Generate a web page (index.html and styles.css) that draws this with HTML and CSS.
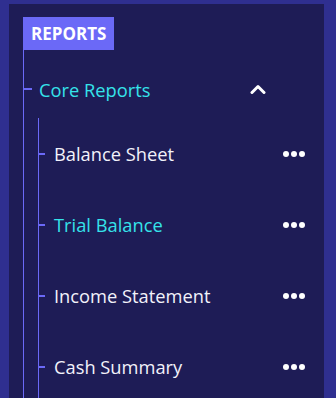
FILE: index.html
```html
<!DOCTYPE html>
<html>
	<head>
		<meta charset="UTF-8">
		<title>Reports</title>
		<link rel="stylesheet" href="styles.css">
	</head>
	<body>
		<section class="panel">
			<div class="badge">REPORTS</div>
			<ul class="tree">
				<li class="group">
					<div class="group-head">
						<span class="group-title">Core Reports</span>
						<svg class="chevron" width="16" height="10" viewBox="0 0 16 10">
							<polyline points="2,8.5 8,2.5 14,8.5" fill="none" stroke="#fff" stroke-width="3" stroke-linecap="round" stroke-linejoin="round" />
						</svg>
					</div>
					<ul class="items">
						<li class="item"><span class="label">Balance Sheet</span><span class="more"><i></i><i></i><i></i></span></li>
						<li class="item active"><span class="label">Trial Balance</span><span class="more"><i></i><i></i><i></i></span></li>
						<li class="item"><span class="label">Income Statement</span><span class="more"><i></i><i></i><i></i></span></li>
						<li class="item"><span class="label">Cash Summary</span><span class="more"><i></i><i></i><i></i></span></li>
					</ul>
				</li>
			</ul>
		</section>
	</body>
</html>
```

FILE: styles.css
```css
html,
body {
	height: 100%;
}

body {
	margin: 0;
	padding: 4px 12px 0 9px;
	box-sizing: border-box;
	background: #2f2f90;
	font-family: "Open Sans", "Noto Sans", sans-serif;
	overflow: hidden;
}

.panel {
	height: 100%;
	background: #1e1c56;
	padding: 13px 0 0 14px;
	box-sizing: border-box;
	display: flex;
	flex-direction: column;
	overflow: hidden;
}

.badge {
	align-self: flex-start;
	height: 33px;
	line-height: 33px;
	padding: 0 8px;
	background: #6b69f7;
	color: #fff;
	font-weight: bold;
	font-size: 17px;
}

ul {
	list-style: none;
	margin: 0;
	padding: 0;
}

.tree {
	flex: 1;
	display: flex;
	flex-direction: column;
	border-left: 1px solid #6b69f7;
}

.group {
	flex: 1;
	display: flex;
	flex-direction: column;
}

.group-head {
	display: flex;
	align-items: center;
	height: 34px;
	margin-top: 22px;
	padding-right: 58px;
}

.group-head::before {
	content: '';
	width: 9px;
	height: 2px;
	margin-left: -1px;
	background: #6b69f7;
}

.group-title {
	flex: 1;
	margin-left: 7px;
	color: #35e3ea;
	font-size: 18.3px;
}

.items {
	flex: 1;
	margin: 12px 0 0 14px;
	border-left: 1px solid #6b69f7;
}

.item {
	display: flex;
	align-items: center;
	height: 71px;
	padding-right: 19px;
}

.item::before {
	content: '';
	width: 7px;
	height: 2px;
	margin-left: -1px;
	background: #6b69f7;
}

.label {
	flex: 1;
	margin-left: 9px;
	color: #f2f2fa;
	font-size: 18.3px;
}

.item.active .label {
	color: #35e3ea;
}

.more {
	display: flex;
	gap: 2px;
}

.more i {
	width: 6px;
	height: 6px;
	border-radius: 50%;
	background: #fff;
}
```
